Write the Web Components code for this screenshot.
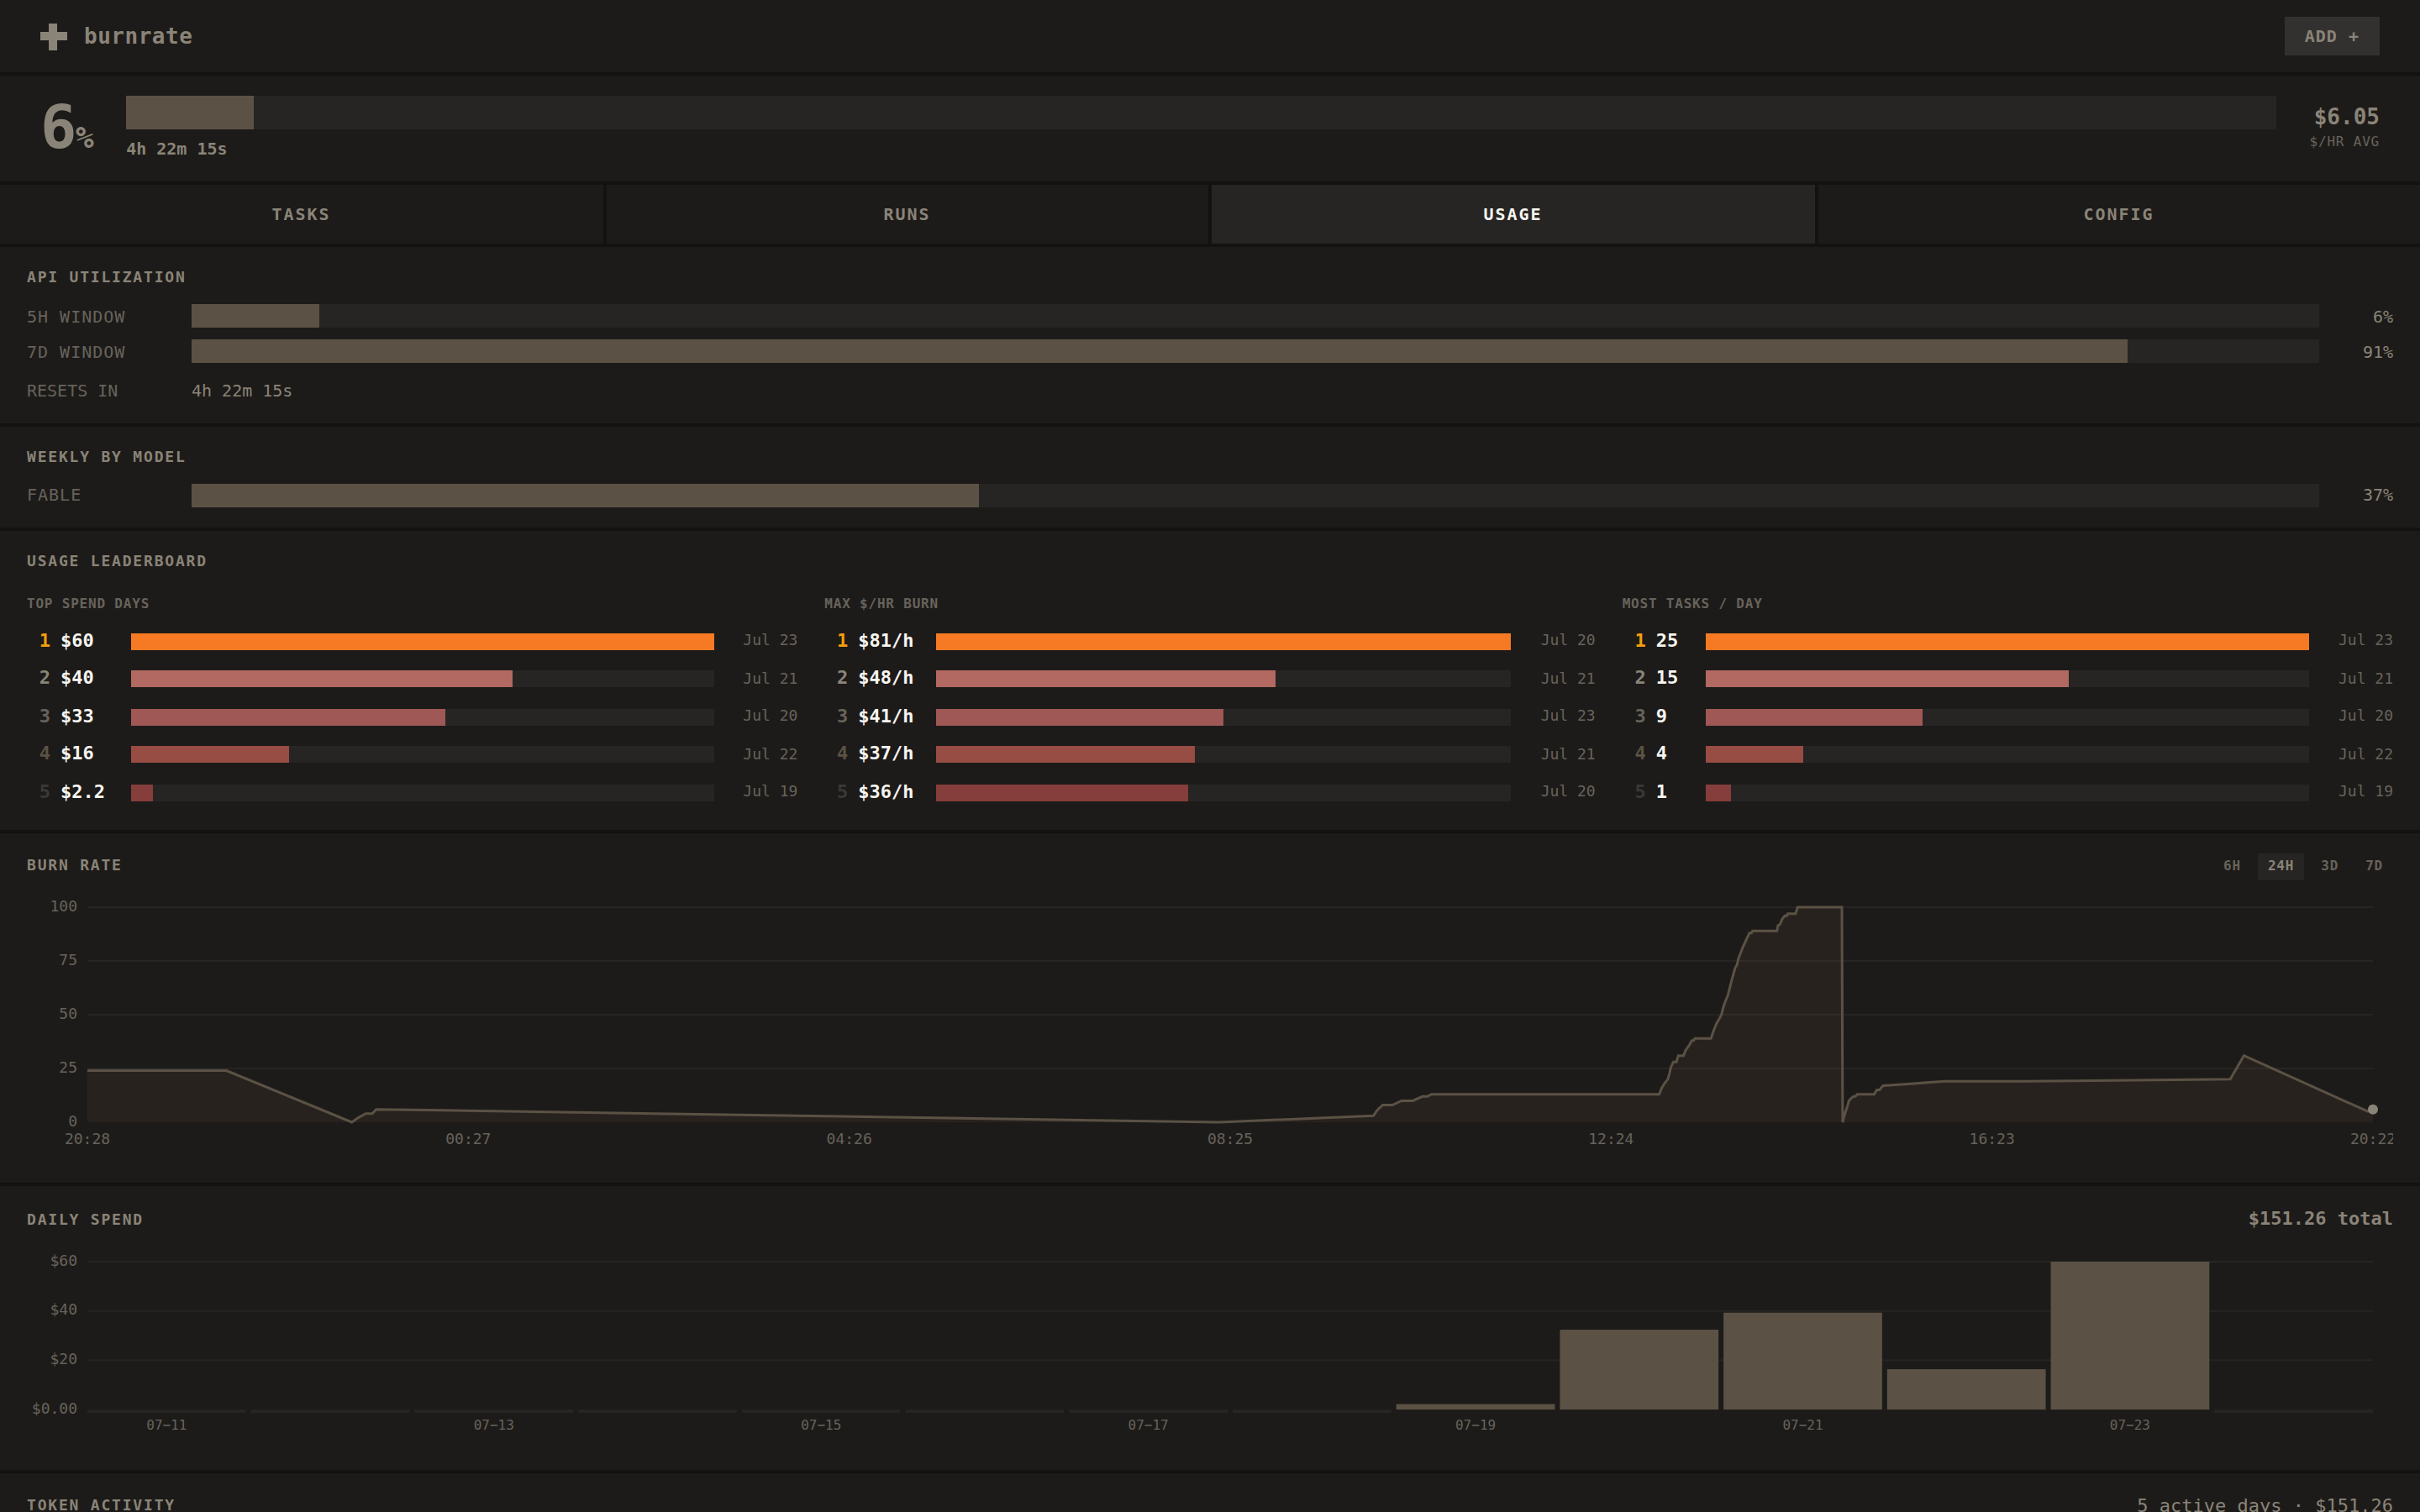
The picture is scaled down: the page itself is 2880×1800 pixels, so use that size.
<!DOCTYPE html>
<html lang="en">
<head>
<meta charset="utf-8">
<title>burnrate</title>
<style>
  :root {
    --bg: #1d1b19;
    --line: #141210;
    --track: #262523;
    --raised: #33312f;
    --fill: #5b5245;
    --text: #8a8478;
    --muted: #67635c;
    --bright: #f7f5f0;
  }

  body {
    margin: 0;
    height: 1800px;
    overflow: hidden;
    background: var(--bg);
    color: var(--text);
    font-family: "DejaVu Sans Mono", monospace;
    font-size: 20px;
    line-height: 30px;
  }
</style>
</head>
<body>
  <app-header name="burnrate"></app-header>
  <usage-meter percent="6" fill="5.94" remaining="4h 22m 15s" rate="$6.05"></usage-meter>
  <tab-bar tabs="TASKS,RUNS,USAGE,CONFIG" active="USAGE"></tab-bar>

  <panel-section heading="API UTILIZATION">
    <div style="display: grid; gap: 14px; padding-top: 19px">
      <meter-row label="5H WINDOW" percent="6"></meter-row>
      <meter-row label="7D WINDOW" percent="91"></meter-row>
    </div>
    <info-row label="RESETS IN">4h 22m 15s</info-row>
  </panel-section>

  <panel-section heading="WEEKLY BY MODEL">
    <div style="padding-top: 19px">
      <meter-row label="FABLE" percent="37" style="--label-margin: 0 0 2px"></meter-row>
    </div>
  </panel-section>

  <panel-section heading="USAGE LEADERBOARD" style="--pad-bottom: 18px">
    <leader-board></leader-board>
  </panel-section>

  <panel-section heading="BURN RATE" style="--pad-top: 24px">
    <range-picker slot="aside" ranges="6H,24H,3D,7D" active="24H"></range-picker>
    <burn-chart></burn-chart>
  </panel-section>

  <panel-section heading="DAILY SPEND" style="--pad-top: 24px; --align: baseline">
    <total-label slot="aside" style="font-weight: bold">$151.26 total</total-label>
    <spend-chart></spend-chart>
  </panel-section>

  <panel-section heading="TOKEN ACTIVITY" style="--pad-top: 24px">
    <total-label slot="aside">5 active days · $151.26</total-label>
  </panel-section>

<script>
class AppHeader extends HTMLElement {
  constructor() {
    super();
    this.shadowDOM = this.attachShadow({ mode: "open" });
  }

  connectedCallback() {
    this.render();
  }

  render() {
    this.shadowDOM.innerHTML = `
      <style>
        :host {
          display: flex;
          align-items: center;
          box-sizing: border-box;
          height: 90px;
          padding: 0 48px;
          border-bottom: 4px solid var(--line);
        }

        svg {
          width: 32px;
          height: 32px;
          margin: 2px 20px 0 0;
          fill: var(--text);
        }

        .name {
          flex: 1;
          font-size: 26px;
          font-weight: bold;
          letter-spacing: 0.02em;
        }

        button {
          border: 0;
          margin: 0;
          padding: 10px 24px;
          background: var(--raised);
          color: var(--text);
          font: bold 20px/26px "DejaVu Sans Mono", monospace;
          letter-spacing: 0.05em;
          cursor: pointer;
        }
      </style>

      <svg viewBox="0 0 32 32" shape-rendering="crispEdges">
        <rect x="10" y="0" width="10" height="32" />
        <rect x="0" y="10" width="32" height="10" />
      </svg>
      <div class="name">${this.getAttribute("name")}</div>
      <button type="button">ADD +</button>
    `;
  }
}

class UsageMeter extends HTMLElement {
  constructor() {
    super();
    this.shadowDOM = this.attachShadow({ mode: "open" });
  }

  connectedCallback() {
    this.render();
  }

  render() {
    this.shadowDOM.innerHTML = `
      <style>
        :host {
          display: flex;
          align-items: center;
          gap: 40px;
          padding: 24px 48px;
          border-bottom: 4px solid var(--line);
          font-weight: bold;
        }

        .percent {
          padding-bottom: 4px;
          font-size: 72px;
          line-height: 72px;
          letter-spacing: -0.02em;
        }

        .percent span {
          font-size: 36px;
          line-height: 1;
        }

        .progress {
          flex: 1;
        }

        .track {
          height: 40px;
          margin-bottom: 8px;
          background: var(--track);
        }

        .fill {
          height: 100%;
          background: var(--fill);
        }

        .rate {
          padding-bottom: 5px;
          text-align: right;
          font-size: 26px;
          line-height: 36px;
        }

        .unit {
          color: var(--muted);
          font-size: 16px;
          font-weight: normal;
          line-height: 23px;
          letter-spacing: 0.05em;
        }
      </style>

      <div class="percent">${this.getAttribute("percent")}<span>%</span></div>
      <div class="progress">
        <div class="track"><div class="fill" style="width: ${this.getAttribute("fill")}%"></div></div>
        <div>${this.getAttribute("remaining")}</div>
      </div>
      <div class="rate">
        <div>${this.getAttribute("rate")}</div>
        <div class="unit">$/HR AVG</div>
      </div>
    `;
  }
}

class TabBar extends HTMLElement {
  constructor() {
    super();
    this.shadowDOM = this.attachShadow({ mode: "open" });
  }

  connectedCallback() {
    this.render();
  }

  render() {
    const active = this.getAttribute("active");
    const tabs = this.getAttribute("tabs").split(",");
    this.shadowDOM.innerHTML = `
      <style>
        :host {
          display: grid;
          grid-template-columns: 722px 720px 722px 1fr;
          border-bottom: 4px solid var(--line);
        }

        .tab {
          padding: 20px 1px 20px 0;
          border-right: 4px solid var(--line);
          font-weight: bold;
          letter-spacing: 0.1em;
          text-align: center;
          cursor: pointer;
        }

        .tab:last-child {
          border-right: 0;
        }

        .tab.active {
          background: var(--track);
          color: var(--bright);
        }
      </style>

      ${tabs.map((tab) => `<div class="tab ${tab === active ? "active" : ""}">${tab}</div>`).join("")}
    `;
  }
}

class PanelSection extends HTMLElement {
  constructor() {
    super();
    this.shadowDOM = this.attachShadow({ mode: "open" });
  }

  connectedCallback() {
    this.render();
  }

  render() {
    this.shadowDOM.innerHTML = `
      <style>
        :host {
          display: block;
          padding: var(--pad-top, 22px) 32px var(--pad-bottom, 24px);
          border-bottom: 4px solid var(--line);
        }

        header {
          display: flex;
          align-items: var(--align, flex-start);
          justify-content: space-between;
        }

        h2 {
          margin: 0;
          font-size: 18px;
          line-height: 27px;
          letter-spacing: 0.1em;
        }
      </style>

      <header>
        <h2>${this.getAttribute("heading")}</h2>
        <slot name="aside"></slot>
      </header>
      <slot></slot>
    `;
  }
}

class MeterRow extends HTMLElement {
  constructor() {
    super();
    this.shadowDOM = this.attachShadow({ mode: "open" });
  }

  connectedCallback() {
    this.render();
  }

  render() {
    const percent = this.getAttribute("percent");
    this.shadowDOM.innerHTML = `
      <style>
        :host {
          display: grid;
          grid-template-columns: 180px 1fr 72px;
          gap: 16px;
          align-items: center;
          height: 28px;
          line-height: 26px;
        }

        .label,
        .value {
          margin: var(--label-margin, 2px 0 0);
        }

        .label {
          color: var(--muted);
          letter-spacing: 0.05em;
        }

        .value {
          text-align: right;
        }

        .track {
          height: 28px;
          background: var(--track);
        }

        .fill {
          height: 100%;
          background: var(--fill);
        }
      </style>

      <div class="label">${this.getAttribute("label")}</div>
      <div class="track"><div class="fill" style="width: ${percent}%"></div></div>
      <div class="value">${percent}%</div>
    `;
  }
}

class InfoRow extends HTMLElement {
  constructor() {
    super();
    this.shadowDOM = this.attachShadow({ mode: "open" });
  }

  connectedCallback() {
    this.render();
  }

  render() {
    this.shadowDOM.innerHTML = `
      <style>
        :host {
          display: grid;
          grid-template-columns: 180px 1fr;
          gap: 16px;
          padding-top: 18px;
        }

        .label {
          color: var(--muted);
        }
      </style>

      <div class="label">${this.getAttribute("label")}</div>
      <div><slot></slot></div>
    `;
  }
}

class TotalLabel extends HTMLElement {
  constructor() {
    super();
    this.shadowDOM = this.attachShadow({ mode: "open" });
  }

  connectedCallback() {
    this.shadowDOM.innerHTML = `
      <style>
        :host {
          display: block;
          font-size: 22px;
          line-height: 29px;
        }
      </style>
      <slot></slot>
    `;
  }
}

class RangePicker extends HTMLElement {
  constructor() {
    super();
    this.shadowDOM = this.attachShadow({ mode: "open" });
  }

  connectedCallback() {
    this.render();
  }

  render() {
    const active = this.getAttribute("active");
    const ranges = this.getAttribute("ranges").split(",");
    this.shadowDOM.innerHTML = `
      <style>
        :host {
          display: flex;
          gap: 8px;
        }

        button {
          border: 0;
          margin: 0;
          padding: 4px 12px 7px;
          background: none;
          color: var(--muted);
          font: bold 16px/21px "DejaVu Sans Mono", monospace;
          letter-spacing: 0.05em;
          cursor: pointer;
        }

        button.active {
          background: var(--track);
          color: var(--text);
        }
      </style>

      ${ranges.map((range) => `<button type="button" class="${range === active ? "active" : ""}">${range}</button>`).join("")}
    `;
  }
}

// rows are [value, bar width in percent, date]
const boards = [
  {
    title: "TOP SPEND DAYS",
    valueWidth: 72,
    dateWidth: 87.5,
    rows: [
      ["$60", 100, "Jul 23"],
      ["$40", 65.4, "Jul 21"],
      ["$33", 53.9, "Jul 20"],
      ["$16", 27.1, "Jul 22"],
      ["$2.2", 3.7, "Jul 19"],
    ],
  },
  {
    title: "MAX $/HR BURN",
    valueWidth: 81,
    dateWidth: 88.5,
    rows: [
      ["$81/h", 100, "Jul 20"],
      ["$48/h", 59, "Jul 21"],
      ["$41/h", 50, "Jul 23"],
      ["$37/h", 45, "Jul 21"],
      ["$36/h", 43.85, "Jul 20"],
    ],
  },
  {
    title: "MOST TASKS / DAY",
    valueWidth: 47.5,
    dateWidth: 88,
    rows: [
      ["25", 100, "Jul 23"],
      ["15", 60.1, "Jul 21"],
      ["9", 35.95, "Jul 20"],
      ["4", 16.1, "Jul 22"],
      ["1", 4.15, "Jul 19"],
    ],
  },
];

class LeaderBoard extends HTMLElement {
  constructor() {
    super();
    this.shadowDOM = this.attachShadow({ mode: "open" });
  }

  connectedCallback() {
    this.render();
  }

  renderRow([value, width, date], index) {
    return `
      <div class="row r${index + 1}">
        <div class="rank">${index + 1}</div>
        <div class="value">${value}</div>
        <div class="track"><div class="fill" style="width: ${width}%"></div></div>
        <div class="date">${date}</div>
      </div>
    `;
  }

  render() {
    this.shadowDOM.innerHTML = `
      <style>
        :host {
          display: grid;
          grid-template-columns: repeat(3, 1fr);
          gap: 32px;
          padding-top: 25px;
        }

        h3 {
          margin: 0 0 15px;
          color: var(--muted);
          font-size: 16px;
          line-height: 25px;
          letter-spacing: 0.05em;
        }

        .rows {
          display: grid;
          grid-auto-rows: 44px 46px;
        }

        .row {
          display: grid;
          grid-template-columns: 28px var(--value-width) 1fr var(--date-width);
          gap: 12px;
          align-items: start;
          height: 33px;
        }

        .rank,
        .value {
          font-size: 22px;
          font-weight: bold;
          line-height: 33px;
        }

        .rank {
          text-align: right;
        }

        .value {
          color: var(--bright);
        }

        .date {
          color: var(--muted);
          font-size: 18px;
          line-height: 31px;
          text-align: right;
        }

        .row:nth-child(even) .date {
          padding-top: 2px;
        }

        .track {
          height: 20px;
          margin-top: 8px;
          background: var(--track);
        }

        .fill {
          height: 100%;
        }

        .r1 .rank { color: #f59e0b; }
        .r2 .rank { color: var(--text); }
        .r3 .rank { color: var(--muted); }
        .r4 .rank { color: var(--fill); }
        .r5 .rank { color: #3a3936; }

        .r1 .fill { background: #f57a23; }
        .r2 .fill { background: #b26961; }
        .r3 .fill { background: #9f5855; }
        .r4 .fill { background: #974c44; }
        .r5 .fill { background: #853e3b; }
      </style>

      ${boards.map((board) => `
        <section style="--value-width: ${board.valueWidth}px; --date-width: ${board.dateWidth}px">
          <h3>${board.title}</h3>
          <div class="rows">${board.rows.map(this.renderRow).join("")}</div>
        </section>
      `).join("")}
    `;
  }
}

const chartStyle = `
  :host {
    display: block;
  }

  svg {
    display: block;
    width: 2816px;
    overflow: hidden;
  }

  text {
    fill: var(--muted);
    font-size: 18px;
  }

  .grid {
    stroke: var(--track);
    stroke-width: 2;
  }
`;

// [x, percent] samples, x in chart pixels from the left of the plot
const samples = [
  [0, 24], [165.5, 24], [314.7, 0], [322, 2], [331.3, 4], [339, 4], [343.7, 6], [1347, 0],
  [1530.4, 3], [1535, 5.6], [1541.5, 8], [1553, 8], [1563.9, 10], [1577.3, 10], [1588.9, 12],
  [1594.7, 12], [1599.6, 13], [1870.6, 13], [1873.7, 16], [1876.8, 18], [1880.8, 20],
  [1883, 23], [1884.4, 25.5], [1887.5, 28], [1891, 28], [1893.3, 31], [1899.6, 31],
  [1902, 33.5], [1905.8, 35.5], [1909.4, 38], [1911.6, 38], [1913, 39], [1932.2, 39],
  [1935.7, 43], [1938.9, 46], [1942, 48], [1944.7, 50], [1946.9, 53.5], [1949.6, 56.5],
  [1952.3, 59], [1957.2, 66.5], [1961.2, 72], [1963, 73], [1964.8, 76], [1969.7, 81],
  [1975.5, 86], [1978, 88], [1980.4, 88], [1981.7, 89], [2010.7, 89], [2012, 91.5],
  [2014.3, 92], [2017, 94.5], [2020, 96], [2022.3, 96], [2023.7, 97], [2033, 97],
  [2035.3, 100], [2088, 100], [2088.9, 0], [2092, 4.5], [2094.2, 7], [2096.4, 10],
  [2098.7, 11], [2101.8, 12], [2104, 12], [2106.3, 13], [2126.4, 13], [2129.5, 15],
  [2132.6, 15], [2137, 17], [2210.2, 19], [2306, 19], [2550.2, 20], [2566.4, 31],
  [2714, 5], [2720, 6],
];

class BurnChart extends HTMLElement {
  constructor() {
    super();
    this.shadowDOM = this.attachShadow({ mode: "open" });
  }

  connectedCallback() {
    this.render();
  }

  render() {
    const left = 72;
    const y = (value) => 272 - value * 2.56;
    const times = ["20:28", "00:27", "04:26", "08:25", "12:24", "16:23", "20:22"];
    const line = samples.map(([x, value]) => `${(left + x).toFixed(1)},${y(value).toFixed(2)}`).join(" ");

    this.shadowDOM.innerHTML = `
      <style>
        ${chartStyle}

        :host {
          padding-top: 16px;
        }

        .area {
          fill: rgb(121 94 80 / 12%);
        }

        .line {
          fill: none;
          stroke: var(--fill);
          stroke-width: 3;
        }

        circle {
          fill: var(--text);
        }
      </style>

      <svg viewBox="0 0 2816 320" height="320">
        ${[100, 75, 50, 25].map((value) => `
          <line class="grid" x1="${left}" x2="2792" y1="${y(value)}" y2="${y(value)}" />
        `).join("")}
        ${[100, 75, 50, 25, 0].map((value) => `
          <text x="60" y="${y(value) + 5}" text-anchor="end">${value}</text>
        `).join("")}
        <polygon class="area" points="${left},272 ${line} 2792,272" />
        <polyline class="line" points="${line}" />
        <circle cx="2792" cy="${y(6)}" r="6" />
        ${times.map((time, i) => `
          <text x="${left + (i * 2720) / 6}" y="298" text-anchor="middle">${time}</text>
        `).join("")}
      </svg>
    `;
  }
}

class SpendChart extends HTMLElement {
  constructor() {
    super();
    this.shadowDOM = this.attachShadow({ mode: "open" });
  }

  connectedCallback() {
    this.render();
  }

  render() {
    const left = 72;
    const base = 192;
    const gap = 6;
    const days = [0, 0, 0, 0, 0, 0, 0, 0, 2.2, 32.4, 39.3, 16.36, 60, 0];
    const step = (2720 + gap) / days.length;
    const width = step - gap;
    const y = (value) => base - (value * 176) / 60;

    this.shadowDOM.innerHTML = `
      <style>
        ${chartStyle}

        :host {
          padding-top: 21px;
        }

        .bar {
          fill: var(--fill);
        }

        .empty {
          fill: var(--track);
        }

        .day {
          font-size: 16px;
        }
      </style>

      <svg viewBox="0 0 2816 240" height="240">
        ${[60, 40, 20].map((value) => `
          <line class="grid" x1="${left}" x2="2792" y1="${y(value)}" y2="${y(value)}" />
        `).join("")}
        ${[["$60", 21], ["$40", 79], ["$20", 138], ["$0.00", 197]].map(([label, top]) => `
          <text x="60" y="${top}" text-anchor="end">${label}</text>
        `).join("")}
        ${days.map((value, i) => {
          const x = left + i * step;
          return value
            ? `<rect class="bar" x="${x}" y="${y(value)}" width="${width}" height="${base - y(value)}" />`
            : `<rect class="empty" x="${x}" y="${base}" width="${width}" height="4" />`;
        }).join("")}
        ${days.map((_, i) => (i % 2 ? "" : `
          <text class="day" x="${left + i * step + width / 2}" y="216" text-anchor="middle">07−${11 + i}</text>
        `)).join("")}
      </svg>
    `;
  }
}

customElements.define("app-header", AppHeader);
customElements.define("usage-meter", UsageMeter);
customElements.define("tab-bar", TabBar);
customElements.define("panel-section", PanelSection);
customElements.define("meter-row", MeterRow);
customElements.define("info-row", InfoRow);
customElements.define("total-label", TotalLabel);
customElements.define("range-picker", RangePicker);
customElements.define("leader-board", LeaderBoard);
customElements.define("burn-chart", BurnChart);
customElements.define("spend-chart", SpendChart);
</script>
</body>
</html>
